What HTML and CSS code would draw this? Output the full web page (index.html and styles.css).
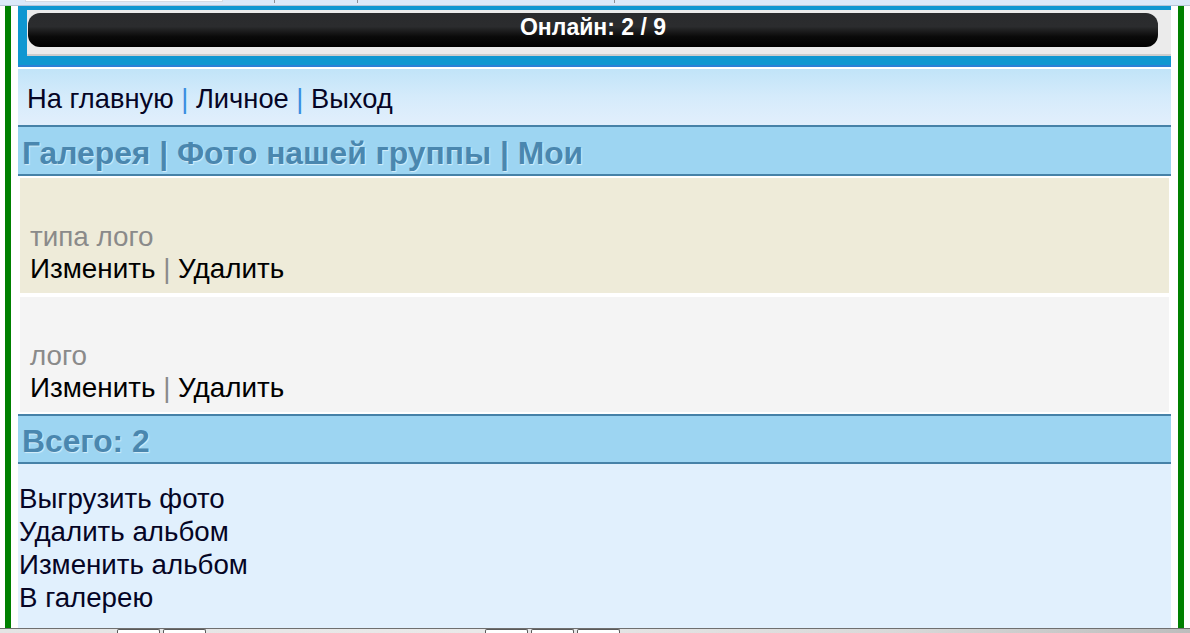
FILE: index.html
```html
<!DOCTYPE html>
<html lang="ru">
<head>
<meta charset="utf-8">
<title>Галерея</title>
<link rel="stylesheet" href="styles.css">
</head>
<body>
<div class="topstrip">
  <span class="tab"></span>
  <span class="tick tick-1"></span>
  <span class="tick tick-2"></span>
  <span class="tick tick-3"></span>
</div>
<div class="page">
  <div class="online-wrap">
    <div class="online-box">
      <div class="online-bar">Онлайн: 2 / 9</div>
    </div>
  </div>
  <div class="nav">
    <a href="#">На главную</a> <span class="sep">|</span> <a href="#">Личное</a> <span class="sep">|</span> <a href="#">Выход</a>
  </div>
  <div class="title title-top">Галерея | Фото нашей группы | Мои</div>
  <div class="item item-a">
    <div class="name">типа лого</div>
    <div class="actions"><a href="#">Изменить</a> <span class="isep">|</span> <a href="#">Удалить</a></div>
  </div>
  <div class="item item-b">
    <div class="name">лого</div>
    <div class="actions"><a href="#">Изменить</a> <span class="isep">|</span> <a href="#">Удалить</a></div>
  </div>
  <div class="title title-total">Всего: 2</div>
  <div class="links">
    <a href="#">Выгрузить фото</a>
    <a href="#">Удалить альбом</a>
    <a href="#">Изменить альбом</a>
    <a href="#">В галерею</a>
  </div>
</div>
<div class="bottomstrip">
  <span class="btn btn-first"></span>
  <span class="btn"></span>
  <span class="btn btn-far"></span>
  <span class="btn"></span>
  <span class="btn"></span>
</div>
</body>
</html>
```
FILE: styles.css
```css
html, body {
  margin: 0;
  padding: 0;
  height: 633px;
  overflow: hidden;
  background: #ffffff;
  font-family: "Liberation Sans", Arial, sans-serif;
}

a {
  text-decoration: none;
  color: inherit;
}

/* top browser strip */
.topstrip {
  height: 5px;
  background: #dbe9f9;
  border-bottom: 1px solid #b6c6d8;
  display: flex;
  align-items: flex-start;
}
.tab {
  margin-left: 25px;
  width: 196px;
  height: 1px;
  background: #ffffff;
  border: 1px solid #d4dbe4;
  border-top: 0;
}
.tick {
  width: 1px;
  height: 3px;
  background: #8a8f96;
}
.tick-1 { margin-left: 51px; }
.tick-2 { margin-left: 82px; }
.tick-3 { margin-left: 256px; }

/* page */
.page {
  margin-left: 5px;
  width: 1153px;
  height: 622px;
  border-left: 6px solid #008000;
  border-right: 6px solid #008000;
  padding: 0 7px;
  display: flex;
  flex-direction: column;
}

.online-wrap {
  background: #0f97d1;
  padding: 4px 0 9px 9px;
  border-bottom: 2px solid #2b80d6;
}
.online-box {
  background: #ebebeb;
  border-bottom: 2px solid #cdcdcd;
  padding: 3px 13px 7px 1px;
}
.online-bar {
  height: 34px;
  border-radius: 12px;
  background: linear-gradient(to bottom, #2a2b2d 0%, #2b2c2e 40%, #1a1a1b 55%, #0a0a0a 70%, #000000 100%);
  color: #ffffff;
  font-weight: bold;
  font-size: 23px;
  line-height: 28px;
  text-align: center;
}

.nav {
  margin-top: 2px;
  height: 56px;
  background: linear-gradient(to bottom, #c1e4f8 0%, #d5ebfb 50%, #e2effc 100%);
  padding-left: 9px;
  font-size: 27.3px;
  line-height: 60px;
  color: #050525;
}
.sep {
  color: #3a8ee0;
}

.title {
  background: #9dd5f2;
  border-top: 2px solid #4682a8;
  border-bottom: 2px solid #4682a8;
  color: #4a87af;
  font-weight: bold;
  font-size: 31.8px;
  padding-left: 4px;
  text-shadow: 1px 1px 1px #d6eefa;
}
.title-top {
  height: 47px;
  line-height: 52px;
}
.title-total {
  margin-top: 2px;
  height: 46px;
  line-height: 51px;
}

.item {
  margin: 0 2px;
  height: 115px;
  padding: 43px 10px 0;
  box-sizing: border-box;
  font-size: 27.8px;
  line-height: 32px;
}
.item-a {
  margin-top: 2px;
  background: #eeebd9;
}
.item-b {
  margin-top: 4px;
  background: #f4f4f4;
}
.name {
  color: #8a8a8a;
}
.actions {
  color: #000000;
}
.isep {
  color: #8a8a8a;
}

.links {
  flex: 1;
  background: #e1f0fd;
  padding: 18px 0 0 1px;
  display: flex;
  flex-direction: column;
  font-size: 27.7px;
  line-height: 33px;
  color: #050525;
}

/* bottom browser strip */
.bottomstrip {
  height: 4px;
  border-top: 1px solid #6f6f6f;
  background: linear-gradient(to right, #e4e4e4 0%, #e9e9e9 40%, #d9d9d9 75%, #bdbdbd 100%);
  display: flex;
  align-items: flex-start;
}
.btn {
  width: 41px;
  height: 4px;
  background: #ffffff;
  border: 1px solid #5a5a5a;
  border-bottom: 0;
  border-radius: 2px 2px 0 0;
  margin-left: 3px;
}
.btn-first { margin-left: 117px; }
.btn-far { margin-left: 279px; }
```
